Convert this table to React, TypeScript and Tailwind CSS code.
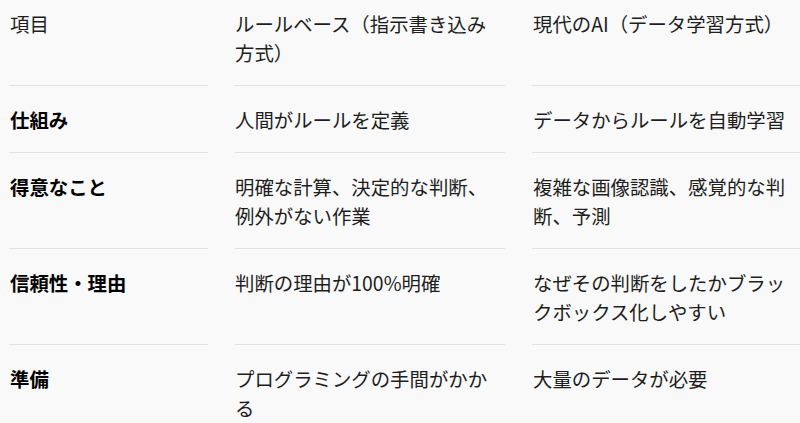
import React from "react";

const rows = [
  { head: "項目", a: "ルールベース（指示書き込み方式）", b: "現代のAI（データ学習方式）", header: true },
  { head: "仕組み", a: "人間がルールを定義", b: "データからルールを自動学習" },
  { head: "得意なこと", a: "明確な計算、決定的な判断、例外がない作業", b: "複雑な画像認識、感覚的な判断、予測" },
  { head: "信頼性・理由", a: "判断の理由が100%明確", b: "なぜその判断をしたかブラックボックス化しやすい" },
  { head: "準備", a: "プログラミングの手間がかかる", b: "大量のデータが必要" },
];

export default function App() {
  return (
    <div
      className="w-[800px] h-[423px] overflow-hidden bg-[#f9f9f9] text-[#1e1e1e]"
      style={{ fontFamily: '"Noto Sans CJK JP", "Noto Sans", sans-serif' }}
    >
      <div className="-mt-[10px] pl-[9px] grid grid-cols-[199px_270px_270px] gap-x-[27px] text-[19.4px] leading-[29px]">
        {rows.map((r, i) => (
          <React.Fragment key={i}>
            <div className={`border-b border-[#e2e2e2] pt-[19px] pb-[18px] pl-px ${r.header ? "font-normal" : "font-bold text-black"}`}>
              {r.head}
            </div>
            <div className="border-b border-[#e2e2e2] pt-[19px] pb-[18px]">{r.a}</div>
            <div className="border-b border-[#e2e2e2] pt-[19px] pb-[18px] pl-px">{r.b}</div>
          </React.Fragment>
        ))}
      </div>
    </div>
  );
}
